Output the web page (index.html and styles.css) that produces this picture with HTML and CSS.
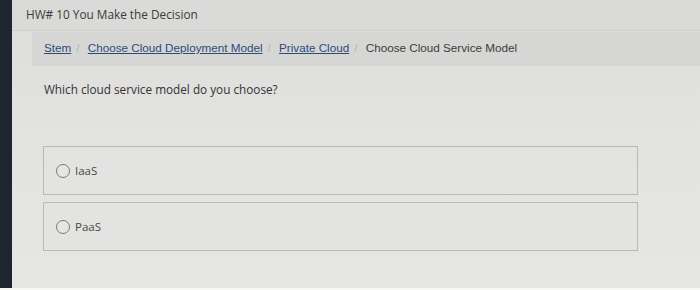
FILE: index.html
```html
<!doctype html>
<html>

<head>
  <meta charset="utf-8">
  <title>HW# 10 You Make the Decision</title>
  <meta name="viewport" content="width=device-width, initial-scale=1">
  <link rel="stylesheet" href="styles.css">
</head>

<body>
  <div class="frame">
    <div class="edge"></div>
    <div class="page">
      <div class="title">HW# 10 You Make the Decision</div>

      <div class="crumbs">
        <a href="#">Stem</a><span class="sep">/</span>
        <a href="#">Choose Cloud Deployment Model</a><span class="sep">/</span>
        <a href="#">Private Cloud</a><span class="sep">/</span>
        <span class="current">Choose Cloud Service Model</span>
      </div>

      <p class="question">Which cloud service model do you choose?</p>

      <div class="options">
        <label class="option"><span class="radio"></span>IaaS</label>
        <label class="option"><span class="radio"></span>PaaS</label>
      </div>
    </div>
  </div>
  <div class="bottom"></div>
</body>

</html>
```

FILE: styles.css
```css
* {
  margin: 0;
  box-sizing: border-box;
}

html,
body {
  height: 100%;
}

body {
  background: #f4f4f2;
  font-family: "Open Sans", sans-serif;
  color: #333;
  display: flex;
  flex-direction: column;
}

.frame {
  display: flex;
  height: 288px;
}

.edge {
  width: 12px;
  background: #1e2430;
}

.page {
  flex: 1;
  background: linear-gradient(to bottom, #dcdcda 0%, #e2e2e0 40%, #e6e6e4 100%);
}

.title {
  height: 31px;
  padding: 6px 0 0 14px;
  font-size: 11.8px;
  color: #3a3a3a;
  background: #dadad8;
  border-bottom: 1px solid #cfcfcd;
}

.crumbs {
  margin: 1px 0 0 20px;
  height: 34px;
  padding: 9px 0 0 12px;
  background: #d6d7d5;
  font-family: "Liberation Sans", Arial, sans-serif;
  font-size: 11.7px;
  color: #3c3c3c;
  white-space: nowrap;
}

.crumbs a {
  color: #2f4a78;
}

.sep {
  color: #b4b4b4;
  margin: 0 5px;
}

.question {
  margin: 15px 0 0 32px;
  font-size: 11.75px;
  color: #333;
}

.options {
  margin: 49px 0 0 31px;
  width: 595px;
  display: flex;
  flex-direction: column;
  gap: 7px;
}

.option {
  height: 49px;
  border: 1px solid #b9b9b7;
  background: #e3e3e1;
  display: flex;
  align-items: center;
  padding-left: 12px;
  font-size: 11.5px;
  font-weight: 500;
  color: #484848;
  gap: 5px;
}

.radio {
  width: 14px;
  height: 14px;
  border-radius: 50%;
  border: 1px solid #7a7a7a;
  background: #e6e6e4;
}

.bottom {
  flex: 1;
  background: #f7f7f5;
}
```
